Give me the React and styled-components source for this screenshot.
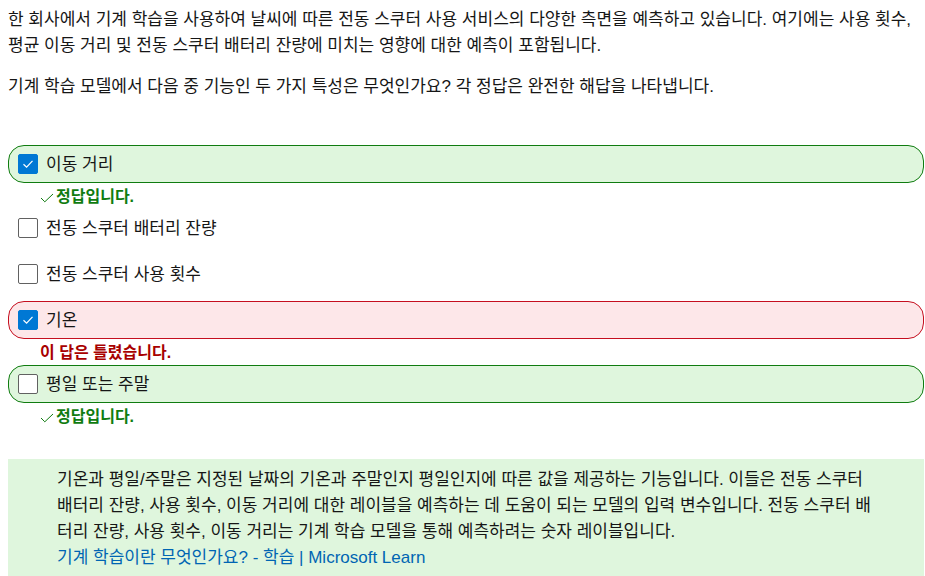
import styled, { createGlobalStyle } from "styled-components";

const GlobalStyle = createGlobalStyle`
  body {
    margin: 0;
    background: #ffffff;
    color: #161616;
    font-family: "Liberation Sans", "Noto Sans CJK KR", sans-serif;
    font-size: 17px;
  }
`;

const options = [
  { label: "이동 거리", checked: true, state: "correct", feedback: "right" },
  { label: "전동 스쿠터 배터리 잔량", checked: false },
  { label: "전동 스쿠터 사용 횟수", checked: false },
  { label: "기온", checked: true, state: "wrong", feedback: "wrong" },
  { label: "평일 또는 주말", checked: false, state: "correct", feedback: "right" },
];

export default function App() {
  return (
    <>
      <GlobalStyle />
      <Page>
        <Paragraph>
          한 회사에서 기계 학습을 사용하여 날씨에 따른 전동 스쿠터 사용 서비스의 다양한 측면을 예측하고
          있습니다. 여기에는 사용 횟수, 평균 이동 거리 및 전동 스쿠터 배터리 잔량에 미치는 영향에 대한
          예측이 포함됩니다.
        </Paragraph>
        <Paragraph>
          기계 학습 모델에서 다음 중 기능인 두 가지 특성은 무엇인가요? 각 정답은 완전한 해답을 나타냅니다.
        </Paragraph>

        <OptionList>
          {options.map((option) => (
            <OptionItem key={option.label}>
              <OptionRow $state={option.state}>
                <Checkbox $checked={option.checked}>
                  {option.checked && (
                    <svg width="12" height="12" viewBox="0 0 12 12">
                      <path d="M1.5 6.2 L4.6 9.2 L10.5 2.8" fill="none" stroke="#fff" strokeWidth="1.2" />
                    </svg>
                  )}
                </Checkbox>
                <Label>{option.label}</Label>
              </OptionRow>
              {option.feedback === "right" && (
                <Feedback $kind="right">
                  <svg width="14" height="10" viewBox="0 0 14 10">
                    <path d="M1 5 L4.8 8.8 L13 1" fill="none" stroke="#107c10" strokeWidth="1" />
                  </svg>
                  정답입니다.
                </Feedback>
              )}
              {option.feedback === "wrong" && <Feedback $kind="wrong">이 답은 틀렸습니다.</Feedback>}
            </OptionItem>
          ))}
        </OptionList>

        <Explanation>
          <p>
            기온과 평일/주말은 지정된 날짜의 기온과 주말인지 평일인지에 따른 값을 제공하는 기능입니다. 이들은
            전동 스쿠터 배터리 잔량, 사용 횟수, 이동 거리에 대한 레이블을 예측하는 데 도움이 되는 모델의 입력
            변수입니다. 전동 스쿠터 배터리 잔량, 사용 횟수, 이동 거리는 기계 학습 모델을 통해 예측하려는 숫자
            레이블입니다.
          </p>
          <LinkText href="#">기계 학습이란 무엇인가요? - 학습 | Microsoft Learn</LinkText>
        </Explanation>
      </Page>
    </>
  );
}

const Page = styled.div`
  padding: 7px 1px 0 8px;
`;

const Paragraph = styled.p`
  margin: 0 0 16px;
  line-height: 25.6px;
`;

const OptionList = styled.div`
  display: flex;
  flex-direction: column;
  gap: 8px;
  margin-top: 45px;
`;

const OptionItem = styled.div`
  display: flex;
  flex-direction: column;
`;

const OptionRow = styled.div`
  box-sizing: border-box;
  height: 38px;
  display: flex;
  align-items: center;
  gap: 8px;
  padding-left: 9px;
  border-radius: 16px;
  border: 1px solid
    ${({ $state }) => ($state === "correct" ? "#107c10" : $state === "wrong" ? "#c50f1f" : "transparent")};
  background: ${({ $state }) => ($state === "correct" ? "#dff6dd" : $state === "wrong" ? "#fde7e9" : "transparent")};
  line-height: 20px;
`;

const Label = styled.span`
  padding-top: 3px;
`;

const Checkbox = styled.span`
  box-sizing: border-box;
  width: 20px;
  height: 20px;
  display: flex;
  align-items: center;
  justify-content: center;
  border-radius: 2px;
  border: 1px solid ${({ $checked }) => ($checked ? "#0078d4" : "#616161")};
  background: ${({ $checked }) => ($checked ? "#0078d4" : "#ffffff")};
`;

const Feedback = styled.div`
  display: flex;
  align-items: center;
  gap: 2px;
  padding: 6px 0 0 32px;
  margin-bottom: -4px;
  line-height: 16px;
  font-weight: 700;
  font-size: 16px;
  color: ${({ $kind }) => ($kind === "right" ? "#107c10" : "#a80000")};
  svg {
    margin-top: 2px;
  }
`;

const Explanation = styled.div`
  margin-top: 38px;
  padding: 8px 42px 8px 49px;
  background: #dff6dd;
  line-height: 26px;
  p {
    margin: 0;
  }
`;

const LinkText = styled.a`
  color: #0065b3;
  text-decoration: none;
`;
